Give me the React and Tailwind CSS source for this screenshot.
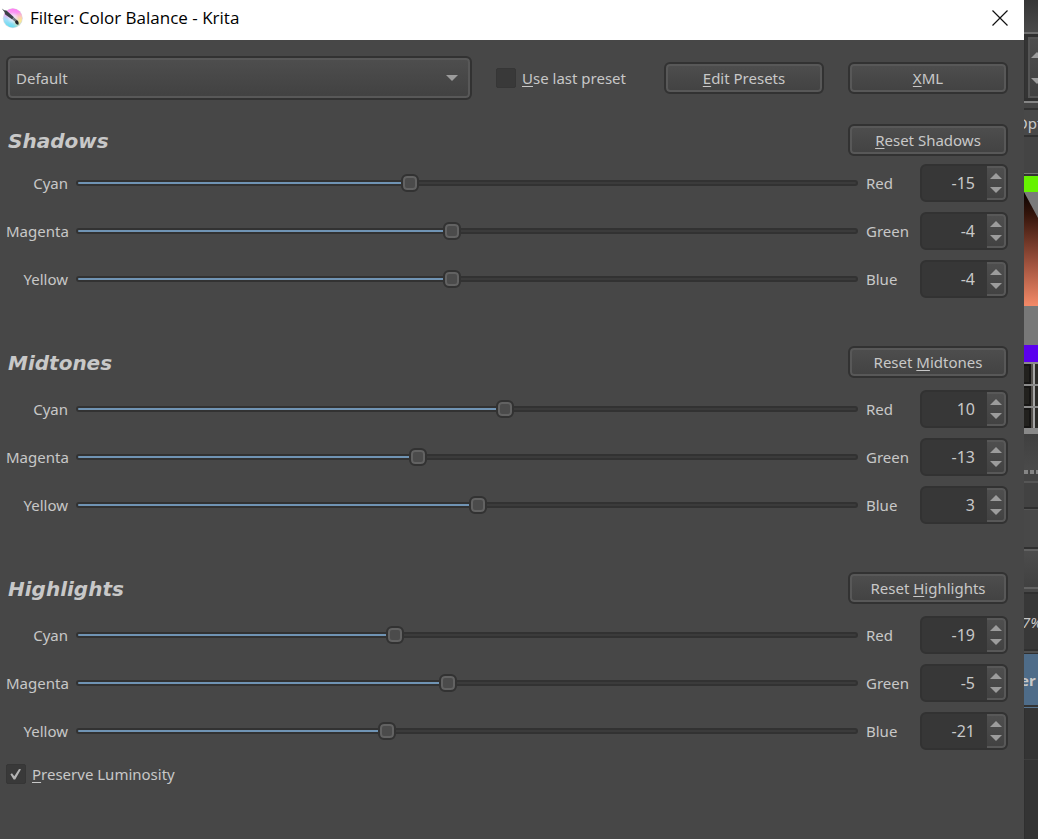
import { useState } from "react";

const SECTIONS = [
  {
    title: "Shadows",
    reset: ["", "R", "eset Shadows"],
    rows: [["Cyan", "Red", -15], ["Magenta", "Green", -4], ["Yellow", "Blue", -4]],
    headGap: "pb-2",
  },
  {
    title: "Midtones",
    reset: ["Reset ", "M", "idtones"],
    rows: [["Cyan", "Red", 10], ["Magenta", "Green", -13], ["Yellow", "Blue", 3]],
    headGap: "pb-3",
  },
  {
    title: "Highlights",
    reset: ["Reset ", "H", "ighlights"],
    rows: [["Cyan", "Red", -19], ["Magenta", "Green", -5], ["Yellow", "Blue", -21]],
    headGap: "pb-3",
  },
];

function Mnemonic({ parts }) {
  return (
    <span className="whitespace-pre">
      {parts[0]}
      <span className="underline decoration-1 underline-offset-2">{parts[1]}</span>
      {parts[2]}
    </span>
  );
}

function PushButton({ parts, onClick }) {
  return (
    <button
      type="button"
      onClick={onClick}
      className="flex h-8 w-40 shrink-0 items-center justify-center rounded-md border-2 border-[#323232] bg-linear-to-b from-[#4e4e4e] to-[#424242] leading-5 shadow-[inset_0_0_0_2px_#585858]"
    >
      <Mnemonic parts={parts} />
    </button>
  );
}

function Triangle({ down }) {
  return (
    <svg viewBox="0 0 12 6" className="h-1.5 w-3 shrink-0" aria-hidden="true">
      <path d={down ? "M0 0H12L6 6Z" : "M0 6H12L6 0Z"} fill="#9c9c9c" />
    </svg>
  );
}

function CheckField({ checked, onChange, parts, className }) {
  return (
    <label className={`flex items-center gap-1.5 ${className}`}>
      <span className="relative flex size-5 shrink-0">
        <input
          type="checkbox"
          checked={checked}
          onChange={(e) => onChange(e.target.checked)}
          className="size-5 appearance-none rounded-xs border border-[#363636] bg-[#393939]"
        />
        {checked && (
          <svg viewBox="0 0 20 20" className="pointer-events-none absolute inset-0 size-5" aria-hidden="true">
            <path d="M4.4 10.3L6 9.3L8.3 12.2L13 5L15 5.2L9.2 15.6H7.6Z" fill="#b4b4b4" />
          </svg>
        )}
      </span>
      <Mnemonic parts={parts} />
    </label>
  );
}

function ChannelRow({ section, low, high, value, onChange }) {
  const id = `${section}-${high}`;
  const percent = (value + 100) / 2;
  return (
    <div className="flex h-[38px] items-center">
      <label htmlFor={`${id}-slider`} className="w-[62px] shrink-0 text-right">{low}</label>
      <input
        id={`${id}-slider`}
        type="range"
        min="-100"
        max="100"
        value={value}
        onChange={(e) => onChange(Number(e.target.value))}
        className="mx-2 h-1.5 min-w-0 flex-1 appearance-none rounded-full border-2 border-[#323232] [&::-webkit-slider-thumb]:size-[18px] [&::-webkit-slider-thumb]:appearance-none [&::-webkit-slider-thumb]:rounded-md [&::-webkit-slider-thumb]:border-2 [&::-webkit-slider-thumb]:border-[#323232] [&::-webkit-slider-thumb]:bg-[#4b4b4b] [&::-webkit-slider-thumb]:shadow-[inset_0_0_0_2px_#626262]"
        style={{ background: `linear-gradient(to right, #7094b4 ${percent}%, #3b3b3b ${percent}%)` }}
      />
      <label htmlFor={`${id}-value`} className="w-[54px] shrink-0">{high}</label>
      <div className="flex h-[38px] w-[88px] shrink-0 overflow-hidden rounded-md border-2 border-[#323232] bg-[#373737]">
        <input
          id={`${id}-value`}
          type="number"
          min="-100"
          max="100"
          value={value}
          onChange={(e) => onChange(Number(e.target.value))}
          className="w-0 min-w-0 flex-1 appearance-none bg-transparent pr-3 text-right text-base [-moz-appearance:textfield] [&::-webkit-inner-spin-button]:appearance-none"
        />
        <div className="flex w-[19px] flex-col rounded-r-sm border-2 border-l-0 border-[#585858] bg-linear-to-b from-[#4e4e4e] to-[#424242]">
          <button type="button" aria-label={`Increase ${high}`} onClick={() => onChange(Math.min(100, value + 1))} className="flex flex-1 items-end justify-center pb-1">
            <Triangle />
          </button>
          <button type="button" aria-label={`Decrease ${high}`} onClick={() => onChange(Math.max(-100, value - 1))} className="flex flex-1 items-start justify-center pt-1">
            <Triangle down />
          </button>
        </div>
      </div>
    </div>
  );
}

function Section({ title, reset, rows, headGap }) {
  const [values, setValues] = useState(rows.map((r) => r[2]));
  return (
    <section>
      <div className={`flex items-center justify-between ${headGap}`}>
        <h2 className="pt-0.5 pl-0.5 font-['DejaVu_Sans',sans-serif] text-xl leading-7 font-bold italic">{title}</h2>
        <PushButton parts={reset} onClick={() => setValues([0, 0, 0])} />
      </div>
      <div className="flex flex-col gap-2.5">
        {rows.map(([low, high], i) => (
          <ChannelRow
            key={high}
            section={title}
            low={low}
            high={high}
            value={values[i]}
            onChange={(v) => setValues(values.map((old, j) => (j === i ? v : old)))}
          />
        ))}
      </div>
    </section>
  );
}

function KritaLogo() {
  return (
    <svg viewBox="0 0 24 24" className="size-6 shrink-0" aria-hidden="true">
      <defs>
        <linearGradient id="disc" x1="0.6" y1="0" x2="0.35" y2="1">
          <stop offset="0" stopColor="#ff7cf2" />
          <stop offset="0.4" stopColor="#f7aef2" />
          <stop offset="0.65" stopColor="#a5def8" />
          <stop offset="1" stopColor="#62dcf0" />
        </linearGradient>
        <radialGradient id="warm" cx="0.95" cy="0.65" r="0.5">
          <stop offset="0" stopColor="#ffe98a" />
          <stop offset="1" stopColor="#ffe98a" stopOpacity="0" />
        </radialGradient>
        <radialGradient id="glow" cx="0.5" cy="0.5" r="0.5">
          <stop offset="0" stopColor="#f2f6ff" />
          <stop offset="1" stopColor="#f2f6ff" stopOpacity="0" />
        </radialGradient>
      </defs>
      <circle cx="12.8" cy="12.3" r="10" fill="#dcdfe3" />
      <circle cx="12.8" cy="12" r="9.4" fill="url(#disc)" />
      <circle cx="12.8" cy="12" r="9.4" fill="url(#warm)" />
      <circle cx="12.8" cy="12" r="6" fill="url(#glow)" />
      <path d="M1.8 2.4Q4.4 4.6 6.4 4.6L14 11.2L12.2 13.6L5.2 8.6Q4.8 5.6 1.8 2.4Z" fill="#3c4047" />
      <path d="M12.4 13.4L14 11.4L16.8 14L15.2 15.8Z" fill="#6f747b" />
      <path d="M15 15.6L16.6 14Q19.4 15.4 18.4 18.8Q15.2 18.6 15 15.6Z" fill="#202329" />
    </svg>
  );
}

function FilmCell() {
  return (
    <div className="flex h-[22px] items-stretch border-t-2 border-[#8a8a8a] bg-[#161514]">
      <span className="w-1.5 border-y-2 border-r border-[#161514] bg-[#22211e]" />
      <span className="mr-1 ml-px w-0.5 bg-[#55524e]" />
      <span className="-ml-1 w-0.5 bg-[#a6a6a6]" />
      <span className="flex-1 bg-[#2a2926]" />
    </div>
  );
}

function BackgroundStrip() {
  return (
    <aside className="flex w-3.5 shrink-0 flex-col overflow-hidden bg-[#343434] text-[15px] text-[#c8c8c8] shadow-[inset_1px_0_0_#303030]">
      <div className="h-8 bg-linear-to-b from-[#363636] to-[#4a4a4a]" />
      <div className="h-[5px] border-t-2 border-[#707070] bg-[#303030]" />
      <div className="ml-1 flex h-[61px] flex-col items-start justify-center gap-5 border-t-2 border-b-2 border-l-2 border-[#555555] bg-linear-to-b from-[#4e4e4e] to-[#404040] pl-px">
        <Triangle />
        <Triangle down />
      </div>
      <div className="h-[3px] bg-[#303030]" />
      <div className="h-0.5 bg-[#858585]" />
      <div className="h-[5px] bg-[#454545]" />
      <div className="flex h-[29px] items-center border-y-2 border-[#313131] bg-[#484848] whitespace-nowrap">
        <span className="-ml-2">Opt</span>
      </div>
      <div className="h-[37px] border-b border-[#777777] bg-[#444444]" />
      <div className="mt-0.5 h-4 bg-[#66f200]" />
      <svg viewBox="0 0 14 114" className="h-[114px] w-3.5" aria-hidden="true">
        <defs>
          <linearGradient id="shade" x1="0" y1="0" x2="0" y2="1">
            <stop offset="0" stopColor="#080200" />
            <stop offset="0.2" stopColor="#35150b" />
            <stop offset="0.65" stopColor="#a45540" />
            <stop offset="1" stopColor="#f48a68" />
          </linearGradient>
        </defs>
        <rect width="14" height="114" fill="#7a7a7a" />
        <path d="M0 0L14 26V114H0Z" fill="url(#shade)" />
      </svg>
      <div className="h-[39px] bg-[#787878]" />
      <div className="h-[17px] bg-[#5b00ee]" />
      <FilmCell />
      <FilmCell />
      <FilmCell />
      <div className="h-1.5 bg-[#898989]" />
      <div className="h-9 bg-linear-to-b from-[#404040] to-[#4a4a4a]" />
      <div className="h-[11px] bg-[#444444]">
        <div className="h-1 bg-[repeating-linear-gradient(to_right,#858585_0_4px,#444444_4px_6px)]" />
      </div>
      <div className="h-7 border-t-2 border-b-2 border-t-[#565656] border-b-[#303030] bg-[#424242]" />
      <div className="h-10 border-t border-b-2 border-t-[#555555] border-b-[#303030] bg-[#484848]" />
      <div className="h-10 border-y-2 border-[#626262] bg-linear-to-b from-[#4c4c4c] to-[#414141]" />
      <div className="h-[3px] bg-[#484848]" />
      <div className="flex h-[59px] items-center border-t-2 border-b-2 border-[#303030] bg-[#383838] italic">
        <span className="-ml-0.5">7%</span>
      </div>
      <div className="h-0.5 bg-[#505050]" />
      <div className="flex h-[52px] items-center border-t border-[#303030] bg-[#4e6c89] font-bold">
        <span className="-ml-1">er</span>
      </div>
      <div className="mt-0.5 h-px bg-[#58748e]" />
      <div className="h-[52px] border-b border-[#3d3d3d]" />
      <div className="flex-1" />
    </aside>
  );
}

export default function App() {
  const [useLast, setUseLast] = useState(false);
  const [preserve, setPreserve] = useState(true);
  return (
    <div className="flex min-h-screen bg-[#343434] font-['Noto_Sans',sans-serif] text-[15px] leading-5 text-[#c8c8c8]">
      <main className="flex min-w-0 flex-1 flex-col bg-[#474747]">
        <header className="flex h-10 items-center justify-between bg-white pr-4 pb-1 text-black">
          <div className="flex items-center gap-1.5">
            <KritaLogo />
            <h1 className="font-['Open_Sans',sans-serif] text-[17px] leading-6">Filter: Color Balance - Krita</h1>
          </div>
          <button type="button" aria-label="Close" className="flex size-4 items-center justify-center">
            <svg viewBox="0 0 16 16" className="size-4" aria-hidden="true">
              <path d="M0.5 0.5L15.5 15.5M15.5 0.5L0.5 15.5" stroke="#111111" strokeWidth="1.2" fill="none" />
            </svg>
          </button>
        </header>

        <div className="flex flex-col pt-4 pr-4 pl-1.5">
          <div className="flex items-center gap-6">
            <div className="relative min-w-0 flex-1">
              <select
                aria-label="Preset"
                defaultValue="Default"
                className="block h-11 w-full appearance-none rounded-md border-2 border-[#323232] bg-linear-to-b from-[#4e4e4e] to-[#414141] px-2 shadow-[inset_0_0_0_2px_#585858]"
              >
                <option>Default</option>
              </select>
              <span className="pointer-events-none absolute inset-y-0 right-3.5 flex items-center">
                <Triangle down />
              </span>
            </div>
            <CheckField checked={useLast} onChange={setUseLast} parts={["", "U", "se last preset"]} className="w-36 shrink-0" />
            <PushButton parts={["", "E", "dit Presets"]} />
            <PushButton parts={["", "X", "ML"]} />
          </div>

          <div className="flex flex-col gap-12 pt-6">
            {SECTIONS.map((s) => (
              <Section key={s.title} {...s} />
            ))}
          </div>

          <CheckField checked={preserve} onChange={setPreserve} parts={["", "P", "reserve Luminosity"]} className="mt-3.5 self-start" />
        </div>
      </main>
      <BackgroundStrip />
    </div>
  );
}
